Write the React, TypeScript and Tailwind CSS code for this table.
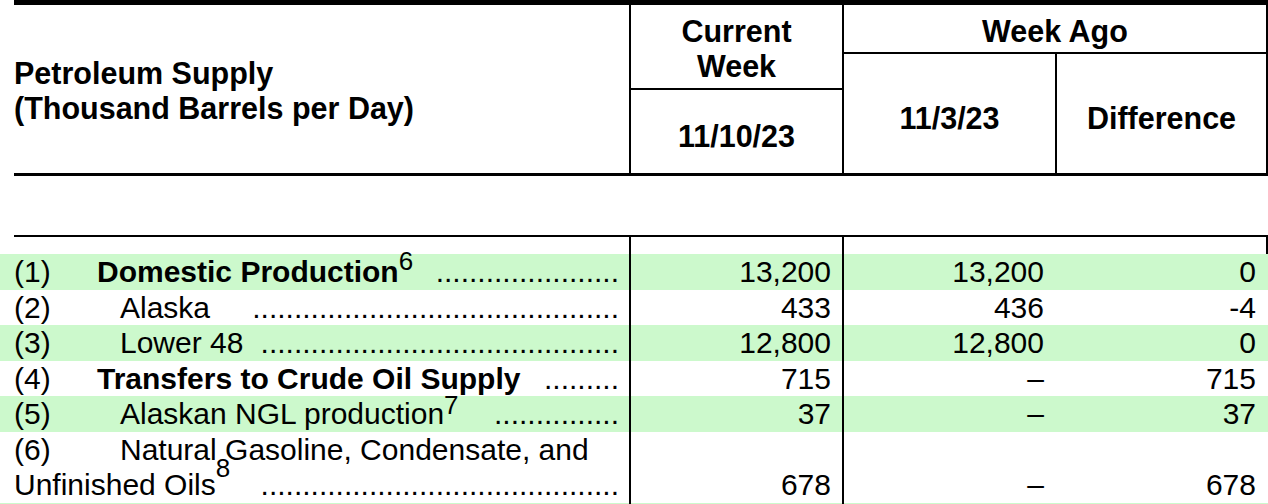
import React from "react";

function Leader({ n }: { n: number }) {
  return (
    <span className="flex-1 min-w-0 overflow-hidden flex justify-end ml-[10px]">
      <span className="whitespace-nowrap">{".".repeat(n)}</span>
    </span>
  );
}

type RowProps = {
  green?: boolean;
  num: string;
  label: string;
  bold?: boolean;
  indent?: boolean;
  sup?: string;
  supPos?: string;
  dots: number;
  v: [string, string, string];
};

function Cells({ v, end }: { v: [string, string, string]; end?: boolean }) {
  const al = end ? "items-end" : "items-start";
  return (
    <>
      <div className={`w-[213px] border-l-2 border-black flex justify-end pr-[11px] ${al}`}>{v[0]}</div>
      <div className={`w-[213px] border-l-2 border-black flex justify-end pr-[11px] ${al}`}>{v[1]}</div>
      <div className={`w-[213px] flex justify-end pr-[12px] ${al}`}>{v[2]}</div>
    </>
  );
}

function Row({ green, num, label, bold, indent, sup, supPos, dots, v }: RowProps) {
  return (
    <div className={`flex pl-[14px] h-[35.5px] ${green ? "bg-[#ccf9cc]" : ""}`}>
      <div className="w-[615px] pr-[10px] flex">
        <span className="w-[83px] shrink-0">{num}</span>
        <span className={`shrink-0 whitespace-nowrap ${bold ? "font-bold" : ""} ${indent ? "pl-[23px]" : ""}`}>
          {label}
          {sup && (
            <span className={`relative text-[26px] leading-none font-normal ${supPos ?? "top-[-12px]"}`}>{sup}</span>
          )}
        </span>
        <Leader n={dots} />
      </div>
      <Cells v={v} />
    </div>
  );
}

export default function App() {
  return (
    <div className="bg-white text-black font-['Liberation_Sans',Arial,sans-serif] w-[1268px] overflow-hidden">
      {/* Header */}
      <div className="flex ml-[14px] h-[176px] border-t-[5px] border-b-[3px] border-black font-bold text-[30.5px] leading-[35px]">
        <div className="w-[615px] flex items-center pt-[4px]">
          <div>
            Petroleum Supply
            <br />
            (Thousand Barrels per Day)
          </div>
        </div>
        <div className="w-[213px] border-l-2 border-black flex flex-col">
          <div className="h-[85px] border-b-2 border-black flex items-center justify-center text-center pt-[4px]">
            <div>
              Current
              <br />
              Week
            </div>
          </div>
          <div className="flex-1 flex items-center justify-center pt-[9px]">11/10/23</div>
        </div>
        <div className="w-[426px] border-x-2 border-black flex flex-col">
          <div className="h-[49px] border-b-2 border-black flex items-center justify-center pt-[6px]">Week Ago</div>
          <div className="flex-1 flex">
            <div className="w-[211px] flex items-center justify-center pt-[9px]">11/3/23</div>
            <div className="flex-1 border-l-2 border-black flex items-center justify-center pt-[9px]">Difference</div>
          </div>
        </div>
      </div>

      <div className="h-[59px]" />

      {/* Data */}
      <div className="border-t-2 border-black ml-[14px]" />
      <div className="text-[30px] leading-[35.5px]">
        <div className="flex pl-[14px] h-[17px]">
          <div className="w-[615px]" />
          <div className="w-[213px] border-l-2 border-black" />
          <div className="w-[213px] border-l-2 border-black" />
          <div className="w-[213px] border-r-2 border-black" />
        </div>
        <Row green num="(1)" label="Domestic Production" bold sup="6" dots={22} v={["13,200", "13,200", "0"]} />
        <Row num="(2)" label="Alaska" indent dots={44} v={["433", "436", "-4"]} />
        <Row green num="(3)" label="Lower 48" indent dots={43} v={["12,800", "12,800", "0"]} />
        <Row num="(4)" label="Transfers to Crude Oil Supply" bold dots={9} v={["715", "–", "715"]} />
        <Row green num="(5)" label="Alaskan NGL production" indent sup="7" supPos="top-[-10px]" dots={15} v={["37", "–", "37"]} />
        <div className="flex pl-[14px] h-[71px]">
          <div className="w-[615px] pr-[10px]">
            <div className="flex h-[35.5px]">
              <span className="w-[83px] shrink-0">(6)</span>
              <span className="pl-[23px] whitespace-nowrap">Natural Gasoline, Condensate, and</span>
            </div>
            <div className="flex h-[35.5px]">
              <span className="shrink-0 whitespace-nowrap">
                Unfinished Oils
                <span className="relative text-[26px] leading-none top-[-18px]">8</span>
              </span>
              <Leader n={43} />
            </div>
          </div>
          <Cells v={["678", "–", "678"]} end />
        </div>
        <Row green num="(7)" label="Renewable Fuels and Oxygenate Plant Net Production" indent dots={3} v={["1,046", "1,048", "-2"]} />
      </div>
    </div>
  );
}
